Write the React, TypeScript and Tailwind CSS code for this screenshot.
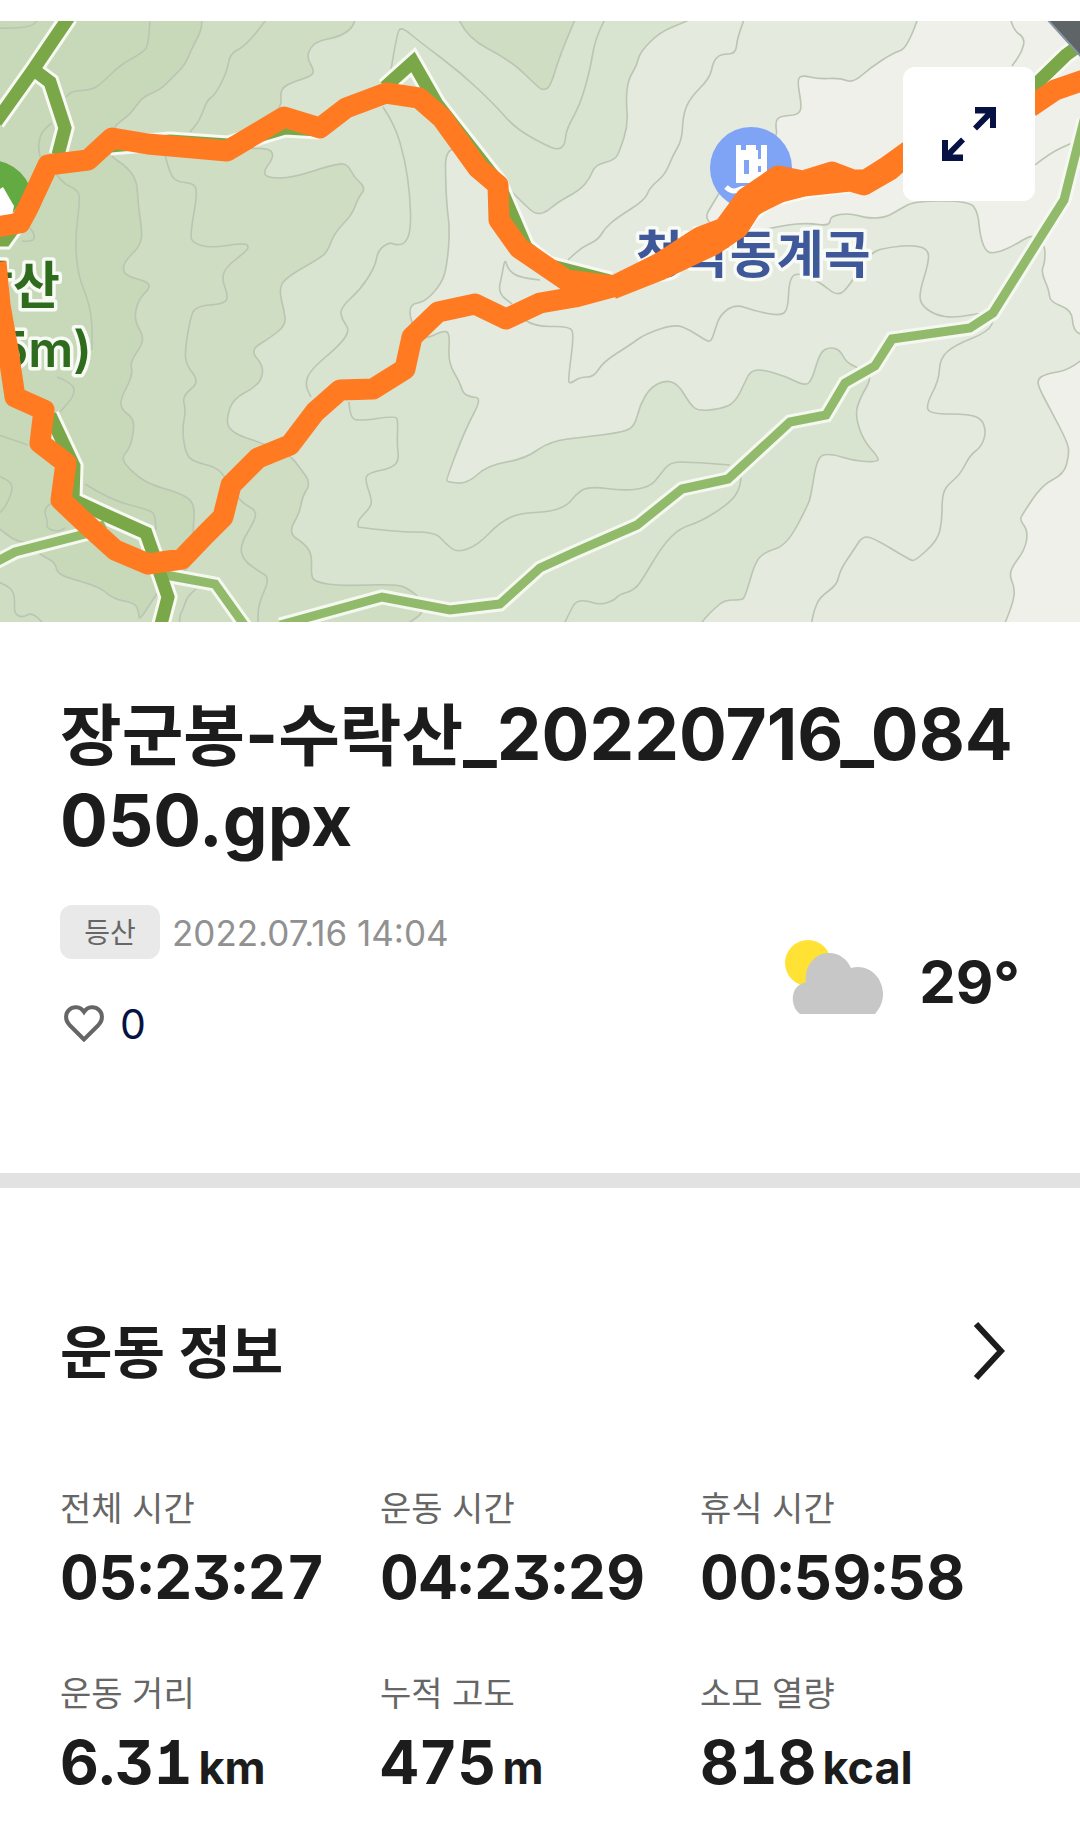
import { useState } from 'react';

// contour bands, each one closed along the outside of the map
const BANDS = [
    {
        fill: '#cfddc3',
        line: '355,17 355,22 350,30 338,37 318,41 310,48 307,58 314,70 312,76 290,83 280,90 282,107 262,130 245,149 265,148 273,152 272,160 263,172 268,178 292,178 338,163 348,165 354,177 366,188 358,198 352,215 335,232 328,250 322,257 285,278 279,290 284,310 286,325 270,338 250,350 262,364 263,375 257,386 233,399 227,417 228,428 240,436 262,443 290,455 300,468 311,483 302,497 300,512 288,533 305,544 312,555 311,575 315,582 340,586 398,584 410,590 420,598 424,612 412,621 400,628',
        close: 'L-4 628 L-4 17 Z',
    },
    {
        fill: '#c8d9b9',
        line: '202,17 202,24 200,33 192,48 185,65 172,78 160,90 142,97 130,115 112,127 108,155 125,165 137,180 138,205 142,230 141,245 124,262 123,272 130,277 148,282 150,288 138,300 134,320 143,335 142,345 130,362 133,375 120,400 122,410 133,418 134,430 130,448 121,458 130,470 148,484 180,493 195,503 193,530 193,568 165,580 139,622 139,612 135,603 113,599 100,587 65,577 57,572 55,562 40,555 30,543 15,541 -4,526',
        close: 'L-4 17 Z',
    },
    { fill: '#cfddc3', line: '457,15 465,37 510,60 537,86 542,90 550,88 560,55 577,15', close: 'Z' },
    {
        fill: '#e4eade',
        line: '700,15 685,22 660,32 640,52 637,65 628,80 626,100 628,125 620,150 615,160 595,165 590,178 580,190 558,202 545,213 535,214 525,205 505,185 445,135 446,200 450,230 447,265 442,283 425,302 410,304 410,320 422,341 444,330 450,334 448,362 460,383 463,393 470,397 482,398 465,430 446,480 448,482 467,484 488,465 525,459 550,441 585,437 625,432 635,425 640,405 650,388 665,380 678,384 690,404 698,411 720,409 735,403 746,380 750,372 760,369 785,376 805,386 812,380 820,352 830,347 840,350 846,362 858,368 873,376 860,398 855,415 863,440 879,458 877,462 855,461 828,453 817,458 811,495 808,505 787,545 765,552 755,562 745,598 740,600 725,600 715,608 705,618 698,628',
        close: 'L1084 628 L1084 15 Z',
    },
    {
        fill: '#eef0e9',
        line: '919,15 908,48 893,53 870,68 853,83 840,78 818,79 802,75 797,80 802,107 798,115 780,116 775,122 778,140 730,175 715,200 702,222 740,235 785,225 808,223 830,226 830,216 850,213 865,218 885,218 900,209 915,201 970,201 978,213 980,235 985,250 992,254 1010,248 1034,233 1045,245 1045,262 1041,272 1049,290 1050,302 1072,310 1073,330 1084,336',
        close: 'L1084 15 Z',
    },
    {
        fill: '#eef0e9',
        line: '1084,358 1070,370 1045,374 1037,380 1040,390 1048,405 1068,443 1069,455 1064,474 1042,485 1022,515 1020,520 1028,531 1025,550 1008,572 1015,588 1013,603 1003,628',
        close: 'L1084 628 Z',
    },
];

const CONTOURS = [
    '-4,28 30,29 40,17',
    '150,17 149,45 142,53 120,65 100,85 90,90 72,91 66,97',
    '268,17 248,45 230,53 227,72 215,95 207,100 200,120 190,132',
    '52,123 42,130 38,145 40,157',
    '55,172 62,183 78,190 80,200 75,240 78,275 88,300 92,320 92,350',
    '165,155 170,175 178,182 192,183 198,190 190,235 193,243 210,248 245,243 249,247 245,252 225,268 222,280 228,295 225,304 195,306 190,320 185,350 186,365 200,382 182,396 186,410 182,430 186,455 195,462 215,467 224,475 240,502 256,510 255,520 240,545 243,560 260,572 270,578 258,605 258,626',
    '383,107 395,125 405,160 410,195 411,230 405,244 395,245 390,242 378,250 375,267 360,290 340,308 342,320 350,330 340,345 310,370 305,385 311,397',
    '391,70 397,32 402,27 420,42 460,72 495,105 515,128 545,145 558,150 565,145 566,130 580,105 590,70 595,40 606,17',
    '745,17 737,38 736,54 720,54 713,62 710,78 690,98 683,115 682,140 673,155 665,175 650,187 645,200 618,217 605,228 598,240 582,247 568,260',
    '540,280 520,278 508,270 505,258 502,275 498,293 512,304',
    '525,320 535,327 570,326 574,335 568,380 570,384 580,377 594,377 603,362 630,345 645,334 675,324 690,330 705,340 711,342 715,330 720,315 735,304 755,311 780,316 788,310 789,280 797,272 820,282 838,297 850,285 870,252 890,247 915,245 929,250 928,265 920,290 920,304 935,315 955,318 985,312 995,318 988,332 955,345 940,358 939,380 926,405 930,414 970,414 983,420 986,435 980,448 970,455 960,475 945,487 942,500 942,520 938,540 915,561 910,560 872,537 862,537 855,548 840,570 837,585 820,597 814,610 811,626',
    '358,527 395,532 435,532 445,543 457,553 478,545 500,522 520,513 550,512 568,505 575,495 588,486 625,491 650,487 660,475 670,462 690,462 730,465',
    '349,402 350,418 360,421 395,416 398,420 397,445 399,460 392,468 368,473 365,480 372,500 370,508 358,520 358,527',
    '741,475 741,487 730,503 700,522 680,528 663,545 645,575 635,590 618,595 615,600 600,605 585,600 575,602 570,612 563,626',
    '1010,17 1013,30 1025,38 1022,52 1012,66',
    '1035,165 1050,153 1072,143',
    '-4,434 28,445',
    '-4,475 10,480 13,490 5,508 -4,516',
    '85,484 110,500 150,510 155,515 156,530',
    '52,503 43,508 48,522 46,528 58,532 65,528',
    '57,377 73,383 75,395 60,412',
    '-4,581 12,587 15,600 14,613 22,618 32,612 46,626',
    '22,241 33,242 35,235 30,228',
    '180,626 179,616 183,610 187,597 196,589',
];

const PATHS = [
    '69,17 33,70 -4,122',
    '30,72 38,73 50,82 65,128 58,155',
    '385,87 413,62 437,104 498,182 526,247 548,265 610,281',
    '110,146 170,141 228,145 285,128 320,130',
    '50,415 74,466 73,500 110,517 146,533 153,553 168,597 160,628',
    '-5,240 5,240 28,208',
    '1084,42 1066,55 1030,90',
    '740,228 752,212 770,198 812,188 853,183',
];

const SIDE_PATHS = [
    '-4,562 15,552 85,534 105,524',
    '160,574 215,584 245,626',
    '280,625 382,597 450,610 500,604 540,568 575,552 637,525 682,489 728,479 790,422 826,415 845,383 875,366 892,339 970,328 993,313 1045,230 1064,200 1084,120',
];

const ROUTE = [
    '-4,227 20,223 28,208 48,165 88,160 112,138 148,144 227,151 284,117 320,128 346,108 386,93 419,98 442,118 478,168 498,185 499,220 519,248 566,280 612,286',
    '-4,262 0,305 8,350 15,397 44,410 40,443 66,463 61,500 82,520 115,550 148,564 182,559 205,535 223,517 231,485 258,458 290,445 315,412 340,390 373,389 405,369 412,337 438,312 475,304 506,319 540,303 575,297 612,287 660,263 700,237 724,228 746,198 778,176 803,181 832,172 853,180 866,180 885,168 910,150',
    '612,289 660,270 713,245 738,228 752,206 780,192 803,186 850,181 864,185 890,170 912,150',
    '1030,107 1055,90 1084,80',
];

// rounds the corners of a point list by curving between the midpoints
function smooth(points: string) {
    const pts = points.split(' ').map((p) => p.split(',').map(Number));
    let d = `M${pts[0][0]} ${pts[0][1]}`;
    for (let i = 1; i < pts.length - 1; i++) {
        const [x, y] = pts[i];
        const [nx, ny] = pts[i + 1];
        d += ` Q${x} ${y} ${(x + nx) / 2} ${(y + ny) / 2}`;
    }
    const last = pts[pts.length - 1];
    return `${d} L${last[0]} ${last[1]}`;
}

function TrailMap() {
    return (
        <svg viewBox="0 21 1080 601" className="block w-full h-auto" role="img" aria-label="등산 경로 지도">
            <rect x="0" y="21" width="1080" height="601" fill="#d8e4cf" />
            <g stroke="#bac5b2" strokeWidth="1.6" strokeLinejoin="round">
                {BANDS.map((band, i) => (
                    <path key={i} d={`${smooth(band.line)} ${band.close}`} fill={band.fill} />
                ))}
                {CONTOURS.map((line, i) => (
                    <path key={i} d={smooth(line)} fill="none" />
                ))}
            </g>
            <circle cx="-10" cy="203" r="43" fill="#62aa41" />
            <path d="M3 187 L14 206 L12 216 H0 V189 Z" fill="#fff" />

            <g fill="none" strokeLinejoin="miter">
                {SIDE_PATHS.map((points, i) => (
                    <polyline key={i} points={points} stroke="#f5f8f0" strokeWidth="15" />
                ))}
                {PATHS.map((points, i) => (
                    <polyline key={i} points={points} stroke="#f7f9f2" strokeWidth="19" />
                ))}
                {SIDE_PATHS.map((points, i) => (
                    <polyline key={i} points={points} stroke="#92ba6b" strokeWidth="9" />
                ))}
                {PATHS.map((points, i) => (
                    <polyline key={i} points={points} stroke="#7aa848" strokeWidth="13" />
                ))}
            </g>

            {/* valley marker */}
            <circle cx="751" cy="168" r="41" fill="#7fa3f5" />
            <path d="M736 145 h5 v5 h5 v-5 h10 v5 h2 v9 h3 v-14 h6 v33 h-9 v5 h-22 Z M744 160 v14 h5 v-14 Z M758 166 v6 h3 v-6 Z" fill="#fff" fillRule="evenodd" />
            <path d="M726 187 q6 6 12 3 t12 -1 t12 1" fill="none" stroke="#fff" strokeWidth="5" />

            <g
                className="font-['Noto_Sans_CJK_KR',sans-serif] font-bold"
                fontSize="51"
                stroke="#f8faf5"
                strokeWidth="7"
                strokeLinejoin="round"
                paintOrder="stroke"
            >
                <text x="636" y="273" fill="#3f5899">청학동계곡</text>
                <g fill="#2f6b1d" textAnchor="end">
                    <text x="60" y="304">락산</text>
                    <text x="92" y="367" className="font-['Inter',sans-serif] font-semibold" fontSize="50">5m)</text>
                </g>
            </g>

            <g fill="none" stroke="#ff7a21" strokeWidth="21" strokeLinejoin="round">
                {ROUTE.map((points, i) => (
                    <polyline key={i} points={points} />
                ))}
            </g>
            <path d="M1047 19 L1066 40 L1084 60 V19 Z" fill="#5f6467" stroke="#8596a4" strokeWidth="2" />
        </svg>
    );
}

function ExpandIcon() {
    return (
        <svg viewBox="0 0 54 54" className="w-[54px] h-[54px]" fill="#061243" aria-hidden="true">
            <path d="M33 0 H54 V21 H48 V10.5 L35 23.5 L31 19.5 L43.5 6.5 H33 Z" />
            <path d="M21 54 H0 V33 H6 V43.5 L19 30.5 L23 34.5 L10.5 47.5 H21 Z" />
        </svg>
    );
}

function HeartIcon() {
    return (
        <svg viewBox="0 0 40 38" className="w-10 h-[38px]" fill="none" stroke="#666" strokeWidth="4" aria-hidden="true">
            <path d="M20 34.5 L5.5 20 C0.8 15 1.2 8.5 5 5 C9 1.2 16 1 20 7 C24 1 31 1.2 35 5 C38.8 8.5 39.2 15 34.5 20 Z" />
        </svg>
    );
}

function WeatherIcon() {
    return (
        <svg viewBox="0 0 98 74" className="w-[98px] h-[74px]" role="img" aria-label="구름 조금">
            <circle cx="23" cy="23" r="23" fill="#ffe234" />
            <path d="M15 74 C6 67 6 53 12 47 C15 44 18 43 21 42 C19 26 30 13 44 13 C54 13 62 19 66 28 C83 23 98 37 98 54 C98 62 95 68 90 74 Z" fill="#c7c7c7" />
        </svg>
    );
}

const stats = [
    { label: '전체 시간', value: '05:23:27' },
    { label: '운동 시간', value: '04:23:29' },
    { label: '휴식 시간', value: '00:59:58' },
    { label: '운동 거리', value: '6.31', unit: 'km' },
    { label: '누적 고도', value: '475', unit: 'm' },
    { label: '소모 열량', value: '818', unit: 'kcal' },
];

export default function App() {
    const [liked, setLiked] = useState(false);

    return (
        <main className="min-h-screen bg-white pt-[21px] font-['Inter','Noto_Sans_CJK_KR',sans-serif] text-[#1c1c1c]">
            <div className="relative">
                <TrailMap />
                <button
                    aria-label="지도 크게 보기"
                    className="absolute right-[45px] top-[46px] flex h-[134px] w-[132px] items-center justify-center rounded-xl bg-white"
                >
                    <ExpandIcon />
                </button>
            </div>

            <section className="px-[60px] pt-[69px] pb-[125px]">
                <h1 className="break-all text-[71px] leading-[86px] font-bold">
                    <span className="text-[67px] leading-none">장군봉</span>-
                    <span className="text-[67px] leading-none">수락산</span>_20220716_084050.gpx
                </h1>

                <div className="mt-[42px] flex items-center justify-between">
                    <div>
                        <div className="flex items-center gap-3">
                            <span className="flex h-[54px] w-[100px] items-center justify-center rounded-xl bg-[#e9e9e9] pt-0.5 text-[28px] text-[#666]">등산</span>
                            <time className="pt-0.5 text-[35px] leading-[52px] text-[#919191]">2022.07.16 14:04</time>
                        </div>
                        <button
                            onClick={() => setLiked(!liked)}
                            aria-label="좋아요"
                            aria-pressed={liked}
                            className="mt-[41px] flex h-12 items-center gap-4 pl-1 text-[41px] text-[#061243]"
                        >
                            <HeartIcon />
                            <span className="pt-0.5">{liked ? 1 : 0}</span>
                        </button>
                    </div>
                    <div className="flex items-end gap-9">
                        <WeatherIcon />
                        <span className="text-[58px] leading-[64px] font-bold">29°</span>
                    </div>
                </div>
            </section>

            <hr className="h-[15px] border-0 bg-[#e2e2e2]" />

            <section className="px-[60px] pt-[132px]">
                <div className="flex items-center justify-between">
                    <h2 className="pt-1 text-[57px] leading-[58px] font-bold">운동 정보</h2>
                    <button aria-label="운동 정보 더보기" className="pr-[15px]">
                        <svg viewBox="0 0 32 60" className="h-[60px] w-8" fill="none" stroke="#1c1c1c" strokeWidth="6" aria-hidden="true">
                            <path d="M3 3 L28 30 L3 57" />
                        </svg>
                    </button>
                </div>

                <dl className="mt-[103px] grid grid-cols-3 gap-y-[57px]">
                    {stats.map((stat) => (
                        <div key={stat.label}>
                            <dt className="text-[34px] leading-[48px] text-[#666]">{stat.label}</dt>
                            <dd className="mt-2 flex items-baseline gap-1.5 text-[60px] leading-[72px] font-bold [font-feature-settings:'tnum','cv01','cv09']">
                                {stat.value}
                                {stat.unit && <span className="text-[45px] leading-none">{stat.unit}</span>}
                            </dd>
                        </div>
                    ))}
                </dl>
            </section>
        </main>
    );
}
